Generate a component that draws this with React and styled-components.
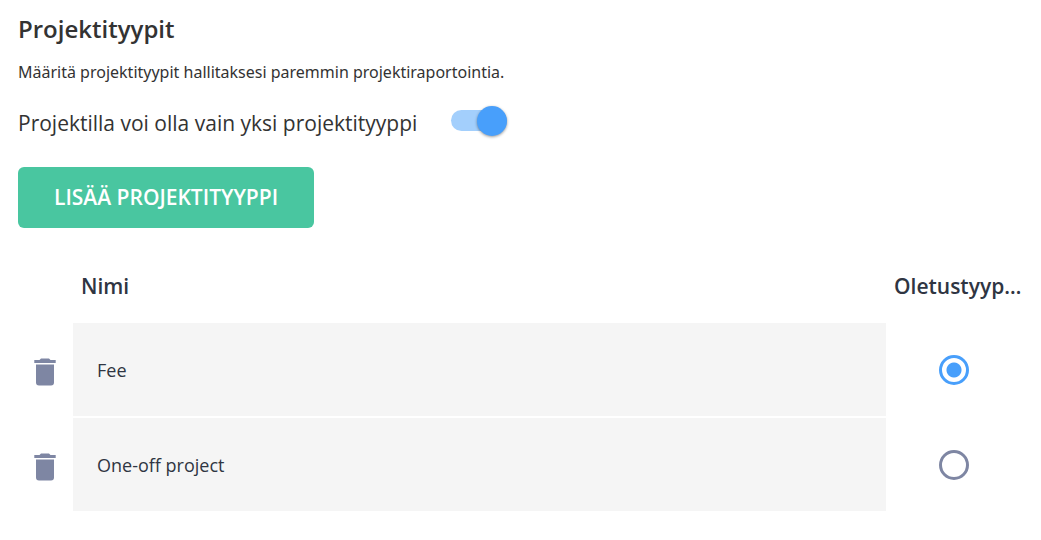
import React, { useState } from "react";
import styled, { createGlobalStyle } from "styled-components";

const GlobalStyle = createGlobalStyle`
  * { box-sizing: border-box; }
  body {
    margin: 0;
    background: #fff;
    color: #333;
    font-family: "Open Sans", "Noto Sans", sans-serif;
  }
`;

const Page = styled.main`
  padding: 12px 19px 24px 18px;
`;

const Title = styled.h1`
  margin: 0;
  font-size: 24px;
  line-height: 34px;
  font-weight: 600;
`;

const Description = styled.p`
  margin: 14px 0 0;
  font-family: "Noto Sans", "Open Sans", sans-serif;
  font-size: 16px;
  line-height: 24px;
`;

const SettingRow = styled.label`
  display: flex;
  align-items: center;
  gap: 34px;
  width: fit-content;
  margin-top: 20px;
  font-size: 21px;
  line-height: 38px;
  cursor: pointer;
`;

const Switch = styled.input`
  appearance: none;
  flex: none;
  display: flex;
  align-items: center;
  width: 56px;
  height: 21px;
  margin: 0 0 5px;
  padding-top: 1px;
  cursor: pointer;
  background: #b8bccb;
  border-radius: 11px;

  &::before {
    content: "";
    flex: none;
    width: 30px;
    height: 30px;
    border-radius: 50%;
    background: #fff;
    box-shadow: 0 1px 3px rgba(0, 0, 0, 0.4);
  }

  &:checked {
    justify-content: flex-end;
    background: #a3cffc;
  }

  &:checked::before {
    background: #489ffb;
  }
`;

const AddButton = styled.button`
  display: block;
  margin-top: 25px;
  padding: 0 36px;
  border: 0;
  border-radius: 6px;
  background: #49c6a0;
  color: #fff;
  font: 600 21px/61px "Open Sans", "Noto Sans", sans-serif;
  text-transform: uppercase;
  cursor: pointer;
`;

const Table = styled.table`
  width: 100%;
  margin-top: 28px;
  table-layout: fixed;
  border-collapse: separate;
  border-spacing: 0 2px;
  color: #2f3542;
`;

const HeadCell = styled.th`
  width: ${(p) => p.$width || "auto"};
  height: 63px;
  padding: 0 0 8px 8px;
  font-size: 21px;
  line-height: 30px;
  font-weight: 600;
  text-align: left;
  white-space: nowrap;
  overflow: hidden;
  text-overflow: ellipsis;
`;

const NameCell = styled.td`
  height: 93px;
  padding: 0 24px;
  background: #f5f5f5;
  font-size: 18px;
  line-height: 26px;
`;

const ControlCell = styled.td`
  padding: 0;
  text-align: center;
`;

const IconButton = styled.button`
  display: block;
  margin: 4px 0 0 16px;
  padding: 0;
  border: 0;
  background: none;
  color: #7e86a3;
  cursor: pointer;

  svg { display: block; }
`;

const Radio = styled.input`
  appearance: none;
  display: block;
  width: 30px;
  height: 30px;
  margin: 0 auto;
  border: 3px solid #7e86a3;
  border-radius: 50%;
  cursor: pointer;

  &:checked {
    border-color: #489ffb;
    background: radial-gradient(circle, #489ffb 7px, transparent 8px);
  }
`;

const TrashIcon = () => (
  <svg width="22" height="28" viewBox="0 0 22 28" fill="currentColor" aria-hidden="true">
    <path d="M0.3 2H5.5L7 0.4H15L16.5 2H21.7V4.9H0.3Z" />
    <path d="M2 6.5H20V24.6A3 3 0 0 1 17 27.6H5A3 3 0 0 1 2 24.6Z" />
  </svg>
);

const types = ["Fee", "One-off project"];

export default function App() {
  const [single, setSingle] = useState(true);
  const [selected, setSelected] = useState("Fee");

  return (
    <Page>
      <GlobalStyle />
      <Title>Projektityypit</Title>
      <Description>Määritä projektityypit hallitaksesi paremmin projektiraportointia.</Description>
      <SettingRow>
        Projektilla voi olla vain yksi projektityyppi
        <Switch type="checkbox" role="switch" checked={single} onChange={(e) => setSingle(e.target.checked)} />
      </SettingRow>
      <AddButton type="button">Lisää projektityyppi</AddButton>
      <Table>
        <thead>
          <tr>
            <HeadCell as="td" $width="55px" />
            <HeadCell scope="col">Nimi</HeadCell>
            <HeadCell scope="col" $width="136px">Oletustyyppi</HeadCell>
          </tr>
        </thead>
        <tbody>
          {types.map((name) => (
            <tr key={name}>
              <ControlCell>
                <IconButton type="button" aria-label={`Poista ${name}`}>
                  <TrashIcon />
                </IconButton>
              </ControlCell>
              <NameCell>{name}</NameCell>
              <ControlCell>
                <Radio
                  type="radio"
                  name="default-type"
                  aria-label={name}
                  checked={selected === name}
                  onChange={() => setSelected(name)}
                />
              </ControlCell>
            </tr>
          ))}
        </tbody>
      </Table>
    </Page>
  );
}
